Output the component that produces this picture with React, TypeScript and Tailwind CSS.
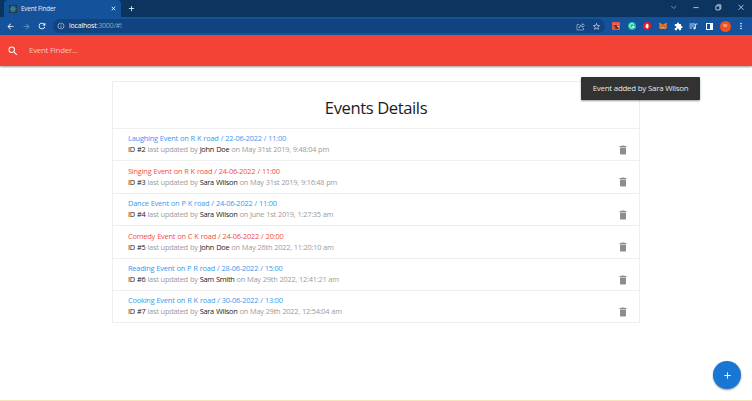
import React from "react";
import {
  MdAdd, MdArrowBack, MdArrowForward, MdClose, MdDelete, MdExtension, MdInfoOutline,
  MdMoreVert, MdRefresh, MdSearch, MdStarBorder,
} from "react-icons/md";

type EventItem = { id: number; title: string; user: string; date: string; red?: boolean };

const events: EventItem[] = [
  { id: 2, title: "Laughing Event on R K road / 22-06-2022 / 11:00", user: "John Doe", date: "May 31st 2019, 9:48:04 pm" },
  { id: 3, title: "Singing Event on R K road / 24-06-2022 / 11:00", user: "Sara Wilson", date: "May 31st 2019, 9:16:48 pm", red: true },
  { id: 4, title: "Dance Event on P K road / 24-06-2022 / 11:00", user: "Sara Wilson", date: "June 1st 2019, 1:27:35 am" },
  { id: 5, title: "Comedy Event on C K road / 24-06-2022 / 20:00", user: "John Doe", date: "May 26th 2022, 11:20:10 am", red: true },
  { id: 6, title: "Reading Event on P R road / 28-06-2022 / 15:00", user: "Sam Smith", date: "May 29th 2022, 12:41:21 am" },
  { id: 7, title: "Cooking Event on R K road / 30-06-2022 / 13:00", user: "Sara Wilson", date: "May 29th 2022, 12:54:04 am" },
];

function ReactLogo() {
  return (
    <svg className="h-2 w-2 bg-[#24333d]" viewBox="0 0 16 16" fill="none" stroke="#43a6b8" strokeWidth="1">
      <ellipse cx="8" cy="8" rx="6.5" ry="2.6" />
      <ellipse cx="8" cy="8" rx="6.5" ry="2.6" transform="rotate(60 8 8)" />
      <ellipse cx="8" cy="8" rx="6.5" ry="2.6" transform="rotate(120 8 8)" />
      <circle cx="8" cy="8" r="1" fill="#43a6b8" />
    </svg>
  );
}

function TabStrip() {
  return (
    <div className="flex h-[17px] items-center bg-[#0b345f] text-white">
      <div className="ml-1 flex h-[17px] w-[117px] items-center rounded-t-[4px] bg-[#14529b] pl-[5px] pr-1">
        <ReactLogo />
        <span className="ml-1 flex-1 whitespace-nowrap text-[6.3px] tracking-[-0.15px] text-[#e8eef6]">Event Finder</span>
        <MdClose size={7} />
      </div>
      <MdAdd className="ml-[6px]" size={9} />
      <svg className="ml-auto h-[17px] w-[88px]" viewBox="0 0 88 17" fill="none" stroke="#c4d0dc" strokeWidth="0.9">
        <path d="M7.2 5.9l2.6 2.6 2.6-2.6" stroke="#8299b1" />
        <path d="M29.5 7.6h5" />
        <path d="M51.9 5.9h4v4h-4zM53.2 5.7v-.9h3.6v4h-.8" />
        <path d="M74.6 4.8l5 5M79.6 4.8l-5 5" />
      </svg>
    </div>
  );
}

function Extensions() {
  return (
    <div className="flex h-full flex-1 items-center">
      <svg className="ml-[7px] h-2 w-2" viewBox="0 0 9 9">
        <rect width="9" height="9" rx="1" fill="#ef5147" />
        <path d="M2 3.3h1.5l.8.7h2.5v3.5H3.5z" fill="#552a30" />
        <path d="M2 2l1.3.8M7 2L5.8 3M3 5.7h1" stroke="#fbd5d0" strokeWidth=".7" />
        <path d="M6 4.6h1.5v1H6z" fill="#fff" />
      </svg>
      <svg className="ml-[7.5px] h-2 w-2" viewBox="0 0 16 16">
        <circle cx="8" cy="8" r="8" fill="#11c39a" />
        <path d="M11.5 5.2A4.4 4.4 0 1 0 12 9H8.5M12 9v3" fill="none" stroke="#fff" strokeWidth="1.8" />
      </svg>
      <svg className="ml-[7.7px] h-2 w-2" viewBox="0 0 16 16">
        <path d="M5 0h6l5 5v6l-5 5H5l-5-5V5z" fill="#ef1720" />
        <path d="M5.5 8V5H7V3.5h2V4h1v1h1v5L10 12.5H7L4.5 9z" fill="#fff" />
      </svg>
      <svg className="ml-[7.5px] h-2 w-2" viewBox="0 0 16 16">
        <path d="M0 1l6 3h4l6-3-1 7 1 4-5 3-1-2H6l-1 2-5-3 1-4z" fill="#e77b28" />
        <path d="M6 10h4l1 3H5z" fill="#bda58f" />
        <path d="M3 8l3 1-1 1zM13 8l-3 1 1 1z" fill="#552e20" />
        <path d="M6 4h4L9 9H7z" fill="#bc611f" />
      </svg>
      <MdExtension className="ml-[7px]" size={9} />
      <svg className="ml-[6.5px] h-[9px] w-[9px]" viewBox="0 0 18 18" fill="none" stroke="#d7e2ef" strokeWidth="1.8">
        <path d="M1 4h11M1 8h10M1 12h5M17 4h-4v8" />
        <circle cx="11" cy="12.4" r="1.7" fill="#d7e2ef" />
      </svg>
      <svg className="ml-[7.5px] h-[7px] w-[7px]" viewBox="0 0 14 14">
        <path d="M0 0h14v14H0zM2 2v10h6V2z" fillRule="evenodd" fill="#fff" />
      </svg>
      <div className="ml-[7px] flex h-[11px] w-[11px] items-center justify-center rounded-full bg-[#f4511e] pb-px text-[5px] leading-none">w</div>
      <MdMoreVert className="ml-[5px]" size={10} />
    </div>
  );
}

function Toolbar() {
  return (
    <div className="flex h-[18px] items-center bg-[#14529b] pl-[6px] text-white">
      <MdArrowBack size={9} />
      <MdArrowForward className="ml-[6.5px] text-[#7197c6]" size={9} />
      <MdRefresh className="ml-[6.5px]" size={10} />
      <div className="ml-[6px] flex h-[14px] w-[552px] items-center rounded-full bg-[#10437f] pl-1 pr-[4px]">
        <MdInfoOutline size={8} className="text-[#c6d5e7]" />
        <span className="ml-1 text-[7px] tracking-[-0.2px] text-[#8fa9c7]"><span className="text-white">localhost</span>:3000/#!</span>
        <svg className="ml-auto h-[9px] w-[9px]" viewBox="0 0 18 18" fill="none" stroke="#a9bdd4" strokeWidth="1.3">
          <path d="M7 5H2v11h13v-4M6 12c0-4 3-6 7-6V3l4 4-4 4V8c-3 0-5 1-7 4z" />
        </svg>
        <MdStarBorder className="ml-[7px] text-[#d1dfed]" size={9} />
      </div>
      <Extensions />
    </div>
  );
}

function EventRow({ e }: { e: EventItem }) {
  return (
    <div className="flex h-[32.4px] justify-between border-t border-[#eeeeee] pl-[15px] pr-[10px]">
      <div className="whitespace-nowrap pt-[4.4px] text-[7.4px] leading-[11px] [word-spacing:0.3px]">
        <div className={`tracking-[-0.2px] ${e.red ? "text-[#f44d42]" : "text-[#3a98f0]"}`}>{e.title}</div>
        <div className="tracking-[-0.24px] text-[#9b9b9b]">
          <span className="text-[#202020]">ID #{e.id}</span> last updated by <span className="text-[#202020]">{e.user}</span> on {e.date}
        </div>
      </div>
      <MdDelete className="mt-[15px] text-[#8c8d90]" size={12} />
    </div>
  );
}

export default function App() {
  return (
    <div className="relative flex h-[401px] w-[752px] flex-col overflow-hidden bg-white font-['Open_Sans','Noto_Sans',sans-serif]">
      <TabStrip />
      <Toolbar />
      <header className="flex h-[31px] shrink-0 items-center bg-[#f44336] pl-[7px] text-white shadow-[0_1px_2px_rgba(0,0,0,0.4)]">
        <MdSearch size={12} />
        <span className="ml-[10px] pt-px text-[7.8px] tracking-[-0.2px] text-[#fbc3be]">Event Finder...</span>
      </header>
      <main className="ml-[112px] mt-[15px] w-[528px] border border-[#eeeeee]">
        <h1 className="flex h-[46px] items-center justify-center pt-[6px] text-[16.6px] tracking-[-0.4px] text-[#1c1c1c]">Events Details</h1>
        {events.map((e) => <EventRow key={e.id} e={e} />)}
      </main>
      <div className="mt-auto h-px bg-[#f8e5b4]" />
      <div className="absolute left-[581px] top-[77px] flex h-[23px] w-[119px] items-center justify-center whitespace-nowrap rounded-[1px] bg-[#323232] text-[7.9px] tracking-[-0.28px] text-[#e6e6e6] shadow-[0_1px_2px_rgba(0,0,0,0.4)] [word-spacing:0.3px]">
        Event added by Sara Wilson
      </div>
      <button className="absolute left-[713px] top-[361px] flex h-7 w-7 items-center justify-center rounded-full bg-[#1976d2] text-white shadow-[0_1px_2px_rgba(0,0,0,0.4)]">
        <MdAdd size={11} />
      </button>
    </div>
  );
}
